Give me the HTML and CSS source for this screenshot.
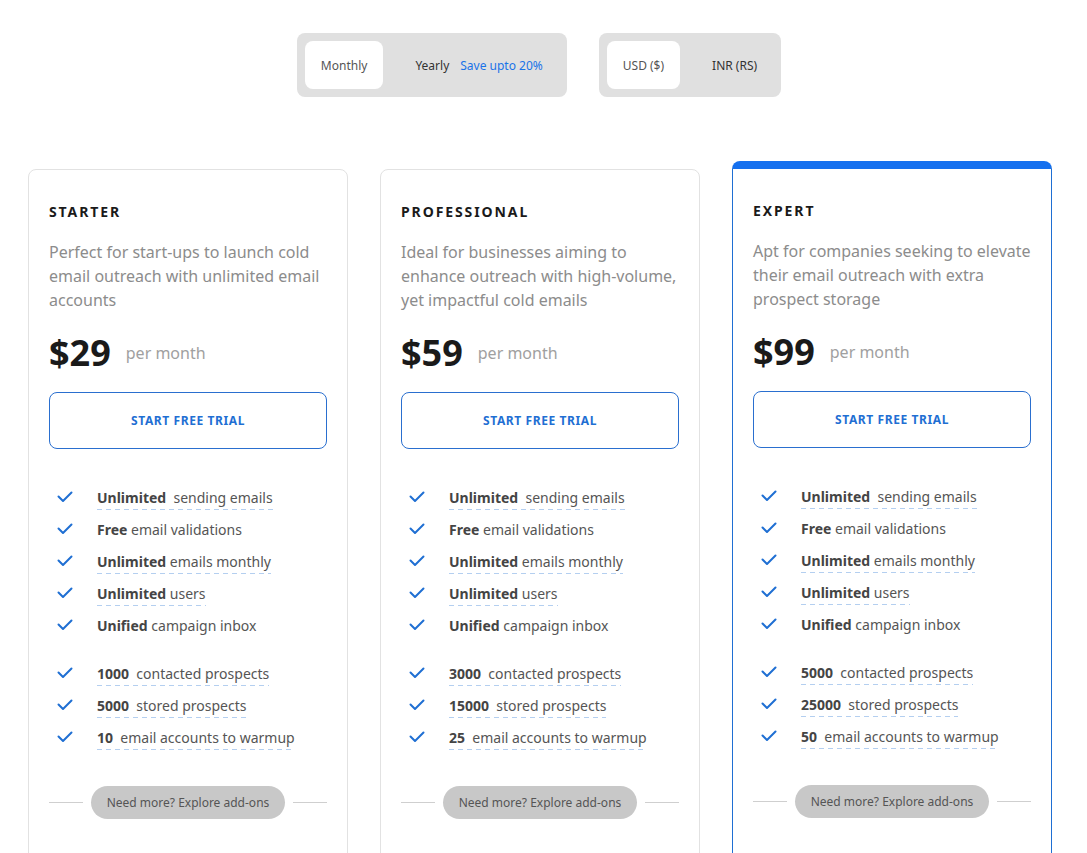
FILE: index.html
```html
<!DOCTYPE html>
<html>
<head>
<meta charset="utf-8">
<link rel="stylesheet" href="styles.css">
</head>
<body>
<div class="page">
  <div class="toggles">
    <div class="toggle">
      <div class="seg active">Monthly</div>
      <div class="seg"><span class="dark">Yearly</span><span class="save">Save upto 20%</span></div>
    </div>
    <div class="toggle">
      <div class="seg active">USD ($)</div>
      <div class="seg">INR (RS)</div>
    </div>
  </div>

  <div class="cards">
    <div class="card">
      <div class="title">STARTER</div>
      <div class="desc">Perfect for start-ups to launch cold email outreach with unlimited email accounts</div>
      <div class="price"><span class="amount">$29</span><span class="per">per month</span></div>
      <a class="btn">START FREE TRIAL</a>
      <ul class="features">
        <li><svg class="chk" viewBox="0 0 16 12"><path d="M1.5 5.5 L6 10 L14.5 1.5"/></svg><span class="u"><b>Unlimited</b>&nbsp; sending emails</span></li>
        <li><svg class="chk" viewBox="0 0 16 12"><path d="M1.5 5.5 L6 10 L14.5 1.5"/></svg><span><b>Free</b> email validations</span></li>
        <li><svg class="chk" viewBox="0 0 16 12"><path d="M1.5 5.5 L6 10 L14.5 1.5"/></svg><span class="u"><b>Unlimited</b> emails monthly</span></li>
        <li><svg class="chk" viewBox="0 0 16 12"><path d="M1.5 5.5 L6 10 L14.5 1.5"/></svg><span class="u"><b>Unlimited</b> users</span></li>
        <li><svg class="chk" viewBox="0 0 16 12"><path d="M1.5 5.5 L6 10 L14.5 1.5"/></svg><span><b>Unified</b> campaign inbox</span></li>
      </ul>
      <ul class="features second">
        <li><svg class="chk" viewBox="0 0 16 12"><path d="M1.5 5.5 L6 10 L14.5 1.5"/></svg><span class="u"><b>1000</b>&nbsp; contacted prospects</span></li>
        <li><svg class="chk" viewBox="0 0 16 12"><path d="M1.5 5.5 L6 10 L14.5 1.5"/></svg><span class="u"><b>5000</b>&nbsp; stored prospects</span></li>
        <li><svg class="chk" viewBox="0 0 16 12"><path d="M1.5 5.5 L6 10 L14.5 1.5"/></svg><span class="u"><b>10</b>&nbsp; email accounts to warmup</span></li>
      </ul>
      <div class="addons"><span class="line"></span><span class="pill">Need more? Explore add-ons</span><span class="line"></span></div>
    </div>

    <div class="card">
      <div class="title">PROFESSIONAL</div>
      <div class="desc">Ideal for businesses aiming to enhance outreach with high-volume, yet impactful cold emails</div>
      <div class="price"><span class="amount">$59</span><span class="per">per month</span></div>
      <a class="btn">START FREE TRIAL</a>
      <ul class="features">
        <li><svg class="chk" viewBox="0 0 16 12"><path d="M1.5 5.5 L6 10 L14.5 1.5"/></svg><span class="u"><b>Unlimited</b>&nbsp; sending emails</span></li>
        <li><svg class="chk" viewBox="0 0 16 12"><path d="M1.5 5.5 L6 10 L14.5 1.5"/></svg><span><b>Free</b> email validations</span></li>
        <li><svg class="chk" viewBox="0 0 16 12"><path d="M1.5 5.5 L6 10 L14.5 1.5"/></svg><span class="u"><b>Unlimited</b> emails monthly</span></li>
        <li><svg class="chk" viewBox="0 0 16 12"><path d="M1.5 5.5 L6 10 L14.5 1.5"/></svg><span class="u"><b>Unlimited</b> users</span></li>
        <li><svg class="chk" viewBox="0 0 16 12"><path d="M1.5 5.5 L6 10 L14.5 1.5"/></svg><span><b>Unified</b> campaign inbox</span></li>
      </ul>
      <ul class="features second">
        <li><svg class="chk" viewBox="0 0 16 12"><path d="M1.5 5.5 L6 10 L14.5 1.5"/></svg><span class="u"><b>3000</b>&nbsp; contacted prospects</span></li>
        <li><svg class="chk" viewBox="0 0 16 12"><path d="M1.5 5.5 L6 10 L14.5 1.5"/></svg><span class="u"><b>15000</b>&nbsp; stored prospects</span></li>
        <li><svg class="chk" viewBox="0 0 16 12"><path d="M1.5 5.5 L6 10 L14.5 1.5"/></svg><span class="u"><b>25</b>&nbsp; email accounts to warmup</span></li>
      </ul>
      <div class="addons"><span class="line"></span><span class="pill">Need more? Explore add-ons</span><span class="line"></span></div>
    </div>

    <div class="card featured">
      <div class="title">EXPERT</div>
      <div class="desc">Apt for companies seeking to elevate their email outreach with extra prospect storage</div>
      <div class="price"><span class="amount">$99</span><span class="per">per month</span></div>
      <a class="btn">START FREE TRIAL</a>
      <ul class="features">
        <li><svg class="chk" viewBox="0 0 16 12"><path d="M1.5 5.5 L6 10 L14.5 1.5"/></svg><span class="u"><b>Unlimited</b>&nbsp; sending emails</span></li>
        <li><svg class="chk" viewBox="0 0 16 12"><path d="M1.5 5.5 L6 10 L14.5 1.5"/></svg><span><b>Free</b> email validations</span></li>
        <li><svg class="chk" viewBox="0 0 16 12"><path d="M1.5 5.5 L6 10 L14.5 1.5"/></svg><span class="u"><b>Unlimited</b> emails monthly</span></li>
        <li><svg class="chk" viewBox="0 0 16 12"><path d="M1.5 5.5 L6 10 L14.5 1.5"/></svg><span class="u"><b>Unlimited</b> users</span></li>
        <li><svg class="chk" viewBox="0 0 16 12"><path d="M1.5 5.5 L6 10 L14.5 1.5"/></svg><span><b>Unified</b> campaign inbox</span></li>
      </ul>
      <ul class="features second">
        <li><svg class="chk" viewBox="0 0 16 12"><path d="M1.5 5.5 L6 10 L14.5 1.5"/></svg><span class="u"><b>5000</b>&nbsp; contacted prospects</span></li>
        <li><svg class="chk" viewBox="0 0 16 12"><path d="M1.5 5.5 L6 10 L14.5 1.5"/></svg><span class="u"><b>25000</b>&nbsp; stored prospects</span></li>
        <li><svg class="chk" viewBox="0 0 16 12"><path d="M1.5 5.5 L6 10 L14.5 1.5"/></svg><span class="u"><b>50</b>&nbsp; email accounts to warmup</span></li>
      </ul>
      <div class="addons"><span class="line"></span><span class="pill">Need more? Explore add-ons</span><span class="line"></span></div>
    </div>
  </div>
</div>
</body>
</html>
```

FILE: styles.css
```css
* { box-sizing: border-box; }
html, body { margin: 0; padding: 0; background: #fff; }
body {
  font-family: "Noto Sans", "Open Sans", sans-serif;
  color: #333;
  height: 853px;
  overflow: hidden;
}
.page {
  width: 1024px;
  margin-left: 28px;
  padding-top: 33px;
}
.toggles {
  display: flex;
  justify-content: center;
  gap: 32px;
  padding-right: 2px;
}
.toggle {
  display: flex;
  align-items: center;
  background: #e0e0e0;
  border-radius: 8px;
  padding: 8px;
  gap: 16px;
}
.seg {
  height: 48px;
  display: flex;
  align-items: center;
  padding: 0 16px;
  font-size: 12px;
  color: #333;
  border-radius: 8px;
}
.seg.active {
  background: #fff;
  color: #555;
}
.seg .save {
  color: #1a73e8;
  margin-left: 11px;
}
.cards {
  display: flex;
  align-items: flex-start;
  gap: 32px;
  margin-top: 64px;
}
.card {
  width: 320px;
  flex: none;
  height: 700px;
  margin-top: 8px;
  border: 1px solid #e2e2e2;
  border-radius: 8px;
  padding: 32px 20px 0 20px;
}
.card.featured {
  margin-top: 0;
  border: 1px solid #1f6fd3;
  border-top: 8px solid #1570ef;
  padding-top: 32px;
}
.title {
  font-size: 14px;
  line-height: 20px;
  font-weight: 700;
  letter-spacing: 1.9px;
  color: #1a1a1a;
}
.desc {
  margin-top: 18px;
  font-size: 16px;
  line-height: 24px;
  color: #8c8c8c;
}
.price {
  margin-top: 18px;
  height: 44px;
  display: flex;
  align-items: center;
}
.amount {
  font-size: 36px;
  font-weight: 700;
  color: #1a1a1a;
}
.per {
  margin-left: 15px;
  font-size: 16px;
  color: #a0a0a0;
  padding-top: 2px;
}
.btn {
  margin-top: 18px;
  display: flex;
  align-items: center;
  justify-content: center;
  height: 57px;
  border: 1px solid #2a6fcf;
  border-radius: 8px;
  color: #1f6fd3;
  font-size: 12px;
  font-weight: 700;
  letter-spacing: 0.6px;
}
.features {
  list-style: none;
  margin: 32px 0 0 0;
  padding: 0;
}
.features.second { margin-top: 16px; }
.features li {
  height: 32px;
  display: flex;
  align-items: center;
  font-size: 14px;
  color: #555;
}
.features li > span {
  padding: 4px 0 3px 0;
}
.chk {
  width: 16px;
  height: 12px;
  margin-left: 8px;
  margin-right: 24px;
  flex: none;
}
.chk path {
  fill: none;
  stroke: #1f6fd3;
  stroke-width: 2;
  stroke-linecap: round;
  stroke-linejoin: round;
}
.features b {
  font-weight: 700;
  color: #444;
}
.features .u {
  background-image: linear-gradient(to right, #b4cff0 60%, transparent 60%);
  background-size: 9px 1.5px;
  background-repeat: repeat-x;
  background-position: left bottom;
}
.addons {
  margin-top: 33px;
  display: flex;
  align-items: center;
  gap: 8px;
}
.addons .line {
  flex: 1;
  height: 1px;
  background: #cfcfcf;
}
.pill {
  height: 33px;
  display: flex;
  align-items: center;
  padding: 0 16px;
  background: #c8c8c8;
  border-radius: 17px;
  font-size: 12px;
  color: #555;
  white-space: nowrap;
}
```
